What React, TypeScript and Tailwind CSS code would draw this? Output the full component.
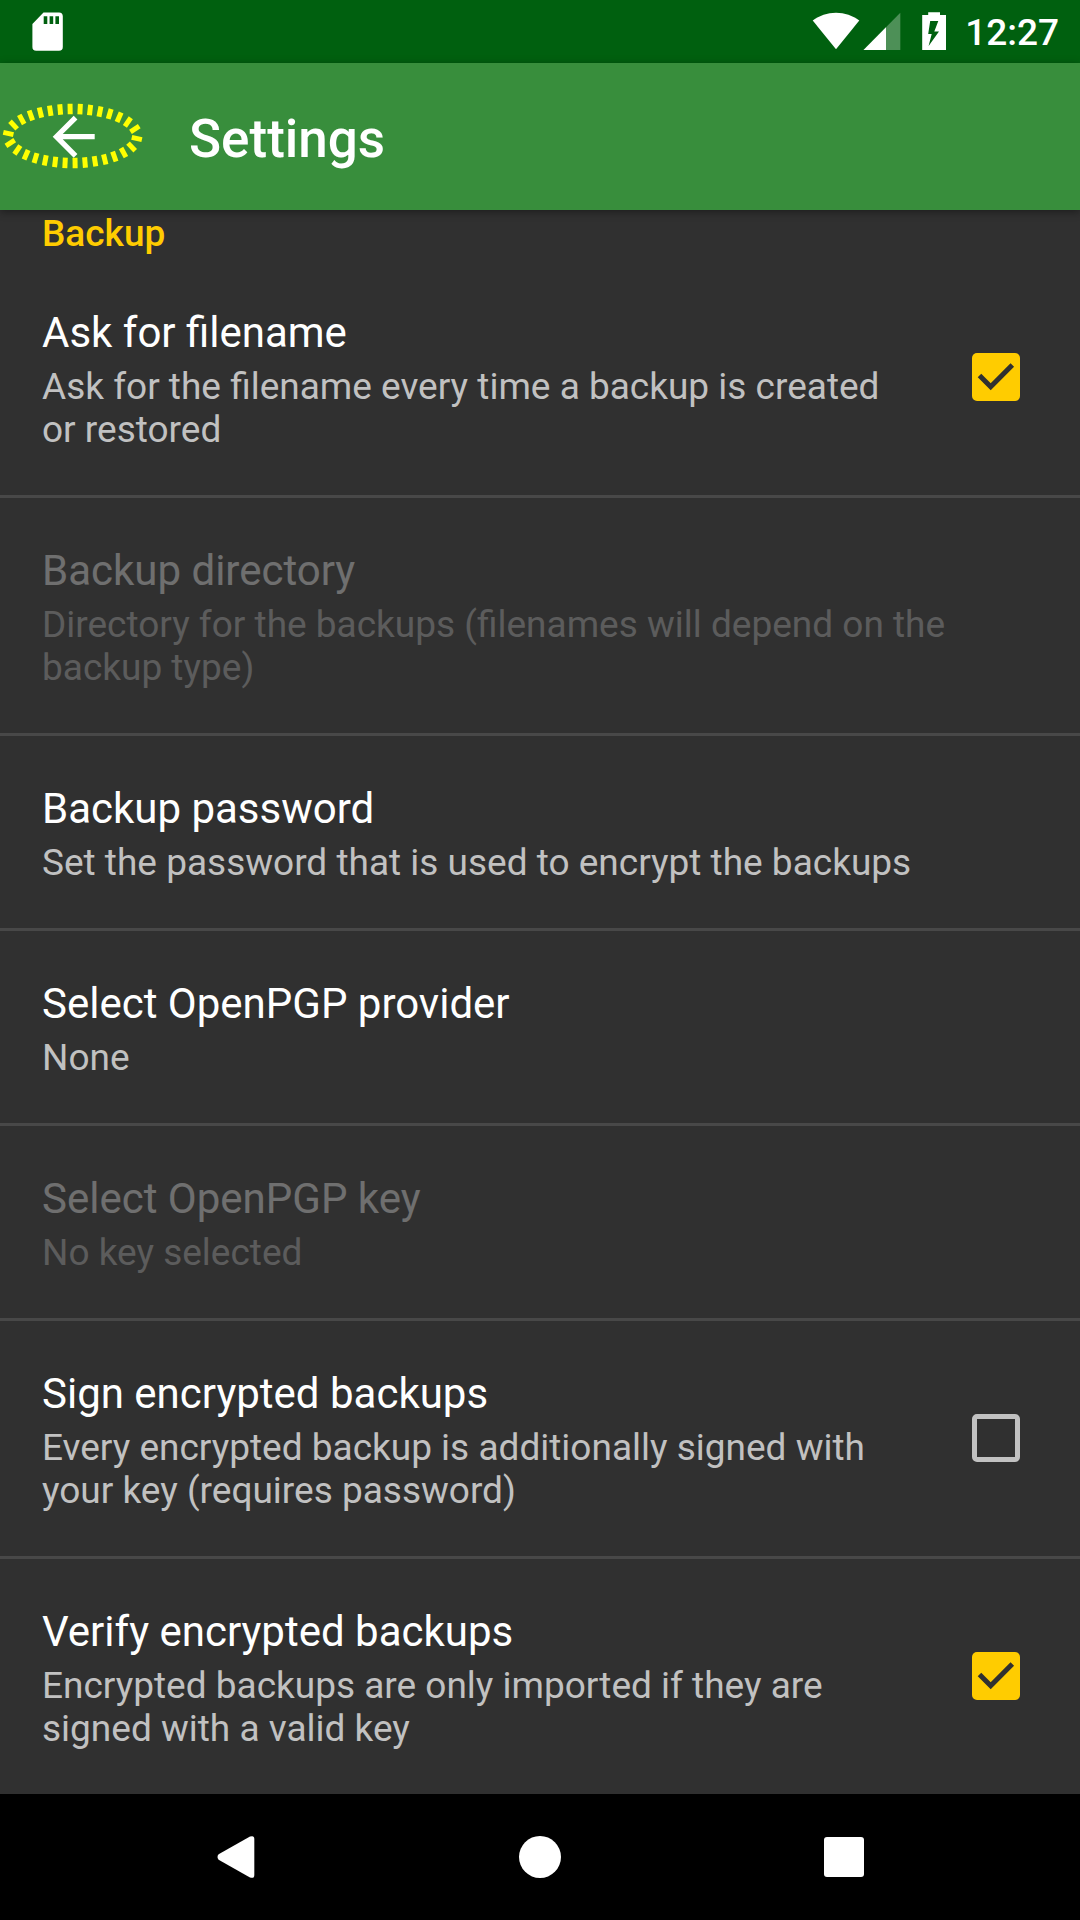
type Preference = {
  title: string;
  summary: string[];
  disabled?: boolean;
  checked?: boolean;
};

const preferences: Preference[] = [
  { title: "Ask for filename", summary: ["Ask for the filename every time a backup is created", "or restored"], checked: true },
  { title: "Backup directory", summary: ["Directory for the backups (filenames will depend on the", "backup type)"], disabled: true },
  { title: "Backup password", summary: ["Set the password that is used to encrypt the backups"] },
  { title: "Select OpenPGP provider", summary: ["None"] },
  { title: "Select OpenPGP key", summary: ["No key selected"], disabled: true },
  { title: "Sign encrypted backups", summary: ["Every encrypted backup is additionally signed with", "your key (requires password)"], checked: false },
  { title: "Verify encrypted backups", summary: ["Encrypted backups are only imported if they are", "signed with a valid key"], checked: true },
];

type Tick = { x1: number; y1: number; x2: number; y2: number };

// Evenly spaced ticks along an ellipse, each one perpendicular to the curve.
function ellipseTicks(cx: number, cy: number, rx: number, ry: number, count: number, length: number): Tick[] {
  const steps = 3600;
  const arc: number[] = [0];
  for (let i = 1; i <= steps; i++) {
    const t = ((i - 0.5) / steps) * 2 * Math.PI;
    arc.push(arc[i - 1] + Math.hypot(rx * Math.sin(t), ry * Math.cos(t)));
  }
  return Array.from({ length: count }, (_, n) => {
    const target = (arc[steps] * (n + 0.25)) / count;
    const t = (arc.findIndex((s) => s >= target) / steps) * 2 * Math.PI;
    const norm = Math.hypot(ry * Math.cos(t), rx * Math.sin(t));
    const dx = ((ry * Math.cos(t)) / norm) * (length / 2);
    const dy = ((rx * Math.sin(t)) / norm) * (length / 2);
    const x = cx + rx * Math.cos(t);
    const y = cy + ry * Math.sin(t);
    return { x1: x - dx, y1: y - dy, x2: x + dx, y2: y + dy };
  });
}

const highlightTicks = ellipseTicks(72.6, 136, 64.5, 27, 30, 10.4);

function StatusBar() {
  return (
    <header className="flex h-[63px] shrink-0 items-start justify-between bg-[#00600f] pl-8 pr-[21px] text-white">
      <svg className="h-[63px] w-8" viewBox="32 0 32 63" aria-label="SD card">
        <path
          fill="currentColor"
          fillRule="evenodd"
          d="M43.5 12.5H59a3.8 3.8 0 0 1 3.8 3.8V47a3.8 3.8 0 0 1-3.8 3.8H36.2a3.8 3.8 0 0 1-3.8-3.8V24ZM43.7 16.2V24h3.6v-7.8ZM49.6 16.2V24h3.6v-7.8ZM55.4 16.2V24h3.6v-7.8Z"
        />
      </svg>
      <div className="flex items-start">
        <svg className="h-[63px] w-[140px]" viewBox="810 0 140 63" fill="currentColor" aria-label="Wi-Fi, mobile signal, charging">
          <path d="M836 49.3 812.7 20.6C819.3 15.6 827.3 12.8 836 12.8s16.700 2.800 23.300 7.800Z" />
          <path fillOpacity="0.3" d="M863.500 50H900.300V12.700Z" />
          <path d="M863.500 50H886V27.200Z" />
          <path
            fillRule="evenodd"
            d="M928.200 12.300H940V15H946V50H922.200V15H928.200ZM930.200 21 928.200 34H931.700L928.600 46 939 31.500H934.300L938.300 21Z"
          />
        </svg>
        <span className="mt-[11px] w-[109px] text-right text-[37px] leading-[43px] font-medium">12:27</span>
      </div>
    </header>
  );
}

function AppBar() {
  return (
    <div className="relative z-10 flex h-[147px] shrink-0 items-center bg-[#388e3c] text-white shadow-[0_2px_8px_rgba(0,0,0,0.4)]">
      <button className="h-[147px] w-[147px]" aria-label="Back">
        <svg className="h-[147px] w-[147px]" viewBox="0 63 147 147">
          {highlightTicks.map((tick, i) => (
            <line key={i} {...tick} stroke="#ffff00" strokeWidth="5" />
          ))}
          <path
            fill="currentColor"
            transform="translate(42.200 105.200) scale(2.625)"
            d="M20 11H7.830l5.590-5.590L12 4l-8 8 8 8 1.410-1.410L7.830 13H20v-2z"
          />
        </svg>
      </button>
      <h1 className="ml-[42px] mt-[5px] text-[53px] leading-[62px] font-medium">Settings</h1>
    </div>
  );
}

function Checkbox({ checked }: { checked: boolean }) {
  return checked ? (
    <div className="mb-[2px] size-12 shrink-0 rounded-[5px] bg-[#ffcc00]">
      <svg className="size-12" viewBox="0 0 48 48" fill="none" stroke="#303030" strokeWidth="5">
        <path d="M7.500 22.500 18.700 33.700 40.300 12" />
      </svg>
    </div>
  ) : (
    <div className="mb-[1px] size-12 shrink-0 rounded-[5px] border-[5.3px] border-[#c1c1c1]" />
  );
}

function PreferenceRow({ item }: { item: Preference }) {
  return (
    <li className="flex shrink-0 items-center justify-between border-b-[3px] border-[#484848] pl-[42px] pr-[60px]">
      <div className={item.disabled ? "pt-[48px] pb-[44px] opacity-30" : "pt-[48px] pb-[44px]"}>
        <h2 className="text-[42px] leading-[49px] text-white">{item.title}</h2>
        <p className="mt-[8px] text-[37px] leading-[43px] whitespace-nowrap text-[#c1c1c1]">
          {item.summary.map((line) => (
            <span key={line} className="block">{line}</span>
          ))}
        </p>
      </div>
      {item.checked !== undefined && <Checkbox checked={item.checked} />}
    </li>
  );
}

function NavigationBar() {
  return (
    <nav className="flex h-[126px] shrink-0 items-center justify-between bg-black pr-[216px] pl-[217px] text-white">
      <svg className="h-[42px] w-[38px]" viewBox="0 0 38 42" fill="currentColor" aria-label="Back">
        <path d="M1.600 18.300 33 .6Q37.300-1 37.300 3V39Q37.300 43 33 41.400L1.600 23.700Q-.6 21 1.600 18.300Z" />
      </svg>
      <div className="size-[42px] rounded-full bg-white" />
      <div className="size-10 rounded-[3px] bg-white" />
    </nav>
  );
}

export default function App() {
  return (
    <div className="flex h-[1920px] w-[1080px] flex-col overflow-hidden bg-[#303030] font-['Roboto',sans-serif]">
      <StatusBar />
      <AppBar />
      <main className="flex min-h-0 flex-1 flex-col overflow-hidden">
        <div className="h-[50px] shrink-0 pt-[2px] pl-[42px] text-[37px] leading-[43px] font-medium text-[#ffcc00]">Backup</div>
        <ul className="flex flex-col">
          {preferences.map((item) => (
            <PreferenceRow key={item.title} item={item} />
          ))}
        </ul>
      </main>
      <NavigationBar />
    </div>
  );
}
